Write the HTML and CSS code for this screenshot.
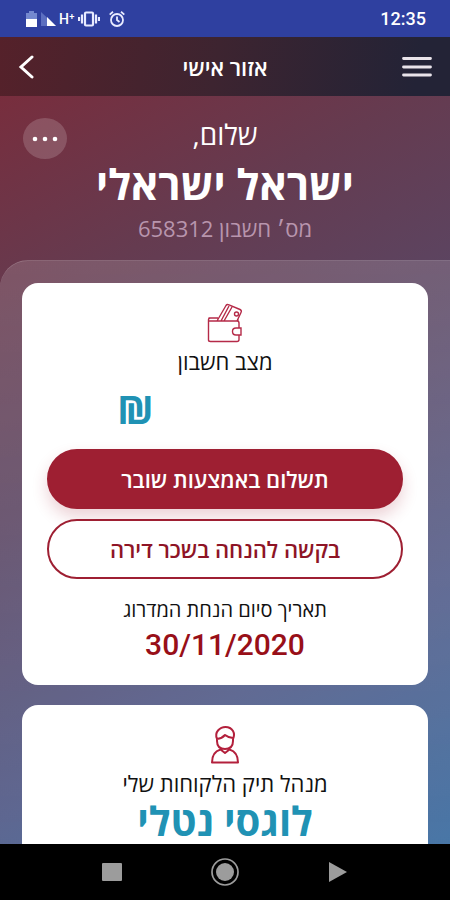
FILE: index.html
```html
<!DOCTYPE html>
<html lang="he" dir="rtl">
<head>
<meta charset="utf-8">
<meta name="viewport" content="width=device-width, initial-scale=1">
<title>אזור אישי</title>
<link rel="stylesheet" href="styles.css">
</head>
<body>
<div class="app">
  <div class="status">
    <time class="clock">12:35</time>
    <div class="status-icons">
      <svg width="12" height="16" viewBox="0 0 12 16"><path d="M3 0h5v2h3v7H0V2h3z" fill="#7488cf"/><path d="M0 8h11v8H0z" fill="#fff"/></svg>
      <svg width="15" height="14" viewBox="0 0 15 14"><path d="M0 0l15 14H0z" fill="#5c6fc0"/><path d="M6 5l9 9H6z" fill="#fff"/></svg>
      <span class="network">H⁺</span>
      <svg width="22" height="16" viewBox="0 0 22 16" fill="none" stroke="#e8ebff" stroke-width="2.200"><rect x="7" y="1.500" width="8" height="13" rx="1"/><path d="M4 3.500v9M18 3.500v9M1 6v4M21 6v4"/></svg>
      <svg class="alarm" width="16" height="16" viewBox="0 0 16 16" fill="none" stroke="#e8ebff" stroke-width="1.800"><circle cx="8" cy="9" r="6"/><path d="M8 5.500V9l2.500 2M.7 3.600L4 .8M15.300 3.600L12 .8"/></svg>
    </div>
  </div>
  <header class="bar">
    <button class="icon-button" type="button" aria-label="תפריט">
      <svg width="30" height="22" viewBox="0 0 30 22" stroke="#e9e4ea" stroke-width="2.800" stroke-linecap="round"><path d="M1.500 2.500h27M1.500 11h27M1.500 19h27"/></svg>
    </button>
    <h1 class="bar-title">אזור אישי</h1>
    <button class="icon-button" type="button" aria-label="חזרה">
      <svg width="16" height="24" viewBox="0 0 16 24" fill="none" stroke="#fff" stroke-width="3" stroke-linecap="round"><path d="M14 2L3 12l11 10"/></svg>
    </button>
  </header>
  <main class="content">
    <section class="hero">
      <button class="more" type="button" aria-label="אפשרויות נוספות">
        <svg width="28" height="6" viewBox="0 0 28 6" fill="#fff"><circle cx="4" cy="3" r="2.300"/><circle cx="14" cy="3" r="2.300"/><circle cx="24" cy="3" r="2.300"/></svg>
      </button>
      <p class="hello">שלום,</p>
      <h2 class="name">ישראל ישראלי</h2>
      <p class="account">מס׳ חשבון 658312</p>
    </section>
    <div class="sheet">
      <section class="card">
        <svg class="card-icon" width="38" height="40" viewBox="0 0 38 40" fill="none" stroke="#b52a48" stroke-width="1.400"><path d="M11 18L20 2.500q1-1.500 3-.7l11 4.700q2 1 1 3L31 18M15 18l8-15M18 18l8-14M7 15H4.500q-2 0-2 2v20q0 1.500 2 1.500H31q2 0 2-2V32M33 25v-5q0-2-2-2H2.500M2.500 15H12M32 16.500v2M33 25h2v7h-5q-3.500 0-3.500-3.500T30 25z"/><circle cx="30.500" cy="11" r="2"/></svg>
        <h3 class="card-title">מצב חשבון</h3>
        <p class="amount">₪</p>
        <button class="pill pill-solid" type="button">תשלום באמצעות שובר</button>
        <button class="pill pill-outline" type="button">בקשה להנחה בשכר דירה</button>
        <p class="note">תאריך סיום הנחת המדרוג</p>
        <p class="date">30/11/2020</p>
      </section>
      <section class="card">
        <svg class="card-icon" width="30" height="40" viewBox="0 0 30 40" fill="none" stroke="#b3203c" stroke-width="2" stroke-linejoin="round"><path d="M7 14q-2-5 1-8.500Q11 2 15.500 2q5 0 7.500 4 2 3.500 0 8M7 14q5-.5 8-4 3 2.500 8 3v3q0 8-8 8t-8-8zM10.500 22v2.500Q2 27 2 37.500h26Q28 27 19.500 24.500V22M10.500 24.500L15 28l4.500-3.500"/></svg>
        <h3 class="card-title">מנהל תיק הלקוחות שלי</h3>
        <p class="manager">לוגסי נטלי</p>
      </section>
    </div>
  </main>
  <nav class="system-nav">
    <button type="button" aria-label="הפעלה"><svg width="20" height="20" viewBox="0 0 20 20"><path d="M1 0l18 10L1 20z" fill="#9c9c9c"/></svg></button>
    <button type="button" aria-label="בית"><svg width="28" height="28" viewBox="0 0 28 28"><circle cx="14" cy="14" r="13" fill="none" stroke="#9c9c9c" stroke-width="1.700"/><circle cx="14" cy="14" r="9" fill="#9c9c9c"/></svg></button>
    <button type="button" aria-label="יישומים"><svg width="20" height="20" viewBox="0 0 20 20"><rect y="1" width="20" height="18" rx="1" fill="#9c9c9c"/></svg></button>
  </nav>
</div>
</body>
</html>
```
FILE: styles.css
```css
* { box-sizing: border-box; }
body, h1, h2, h3, p { margin: 0; }
body { font-family: "Open Sans", "Liberation Sans", sans-serif; color: #111; }
button { font: inherit; color: inherit; background: none; border: 0; padding: 0; cursor: pointer; }
svg { display: block; }

.app {
  height: 100vh;
  display: flex;
  flex-direction: column;
  overflow: hidden;
  background: linear-gradient(152deg, #7a2c3b 6%, #653b50 28%, #5b4562 46%, #535d8a 72%, #3a70a4 98%);
}

.status {
  flex: none;
  height: 37px;
  padding: 0 24px;
  display: flex;
  align-items: center;
  justify-content: space-between;
  background: #2f40a0;
  color: #fff;
  font-family: Roboto, sans-serif;
}
.clock { font-size: 18px; font-weight: 500; }
.status-icons { display: flex; direction: ltr; align-items: center; gap: 3px; padding-left: 2px; }
.network { font-size: 14px; font-weight: 500; }
.alarm { margin-left: 6px; }

.bar {
  flex: none;
  height: 59px;
  padding: 0 18px;
  display: grid;
  grid-template-columns: 30px 1fr 30px;
  align-items: center;
  background: linear-gradient(100deg, #55212a, #3d2430 48%, #232336 92%);
  color: #fff;
}
.icon-button { display: flex; justify-content: flex-end; }
.bar-title { text-align: center; font-size: 22px; font-weight: 600; line-height: 28px; }

.content { flex: 1; min-height: 0; overflow: hidden; }
.hero { position: relative; padding: 20px 24px; text-align: center; color: #fff; }
.more {
  position: absolute;
  top: 22px;
  left: 23px;
  width: 44px;
  height: 41px;
  border-radius: 50%;
  background: rgba(255, 255, 255, .17);
  display: flex;
  align-items: center;
  justify-content: center;
}
.hello { font-size: 28px; line-height: 36px; }
.name { font-size: 42px; font-weight: 700; line-height: 64px; }
.account { font-size: 22px; line-height: 24px; color: #b895ad; }

.sheet {
  padding: 22px 22px 0;
  border-top: 1px solid rgba(255, 255, 255, .18);
  border-radius: 28px 0 0 0;
  background: linear-gradient(rgba(255, 255, 255, .15), rgba(255, 255, 255, .06));
  display: grid;
  gap: 20px;
}
.card {
  padding: 20px 25px;
  border-radius: 16px;
  background: #fff;
  display: flex;
  flex-direction: column;
  align-items: center;
}
.card-title { font-size: 22px; font-weight: 500; line-height: 36px; }
.amount { align-self: flex-end; margin-right: auto; padding: 0 70px; font-size: 40px; font-weight: 700; line-height: 60px; color: #2092b4; }
.pill { width: 100%; height: 60px; border: 2px solid #9e1f32; border-radius: 30px; font-size: 22px; font-weight: 600; }
.pill-solid { margin-top: 10px; background: #9e1f32; color: #fff; box-shadow: 0 8px 16px rgba(158, 31, 50, .2); }
.pill-outline { margin-top: 10px; background: #fff; color: #8e1426; }
.note { margin-top: 16px; font-size: 20px; font-weight: 400; line-height: 30px; }
.date { font-family: Roboto, sans-serif; font-size: 30px; font-weight: 500; line-height: 40px; color: #980f18; }
.manager { font-size: 40px; font-weight: 700; line-height: 40px; color: #2092b4; }

.system-nav {
  flex: none;
  height: 56px;
  padding: 0 56px;
  display: grid;
  grid-template-columns: repeat(3, 1fr);
  align-items: center;
  background: #000;
}
.system-nav button { display: flex; justify-content: center; }
```
